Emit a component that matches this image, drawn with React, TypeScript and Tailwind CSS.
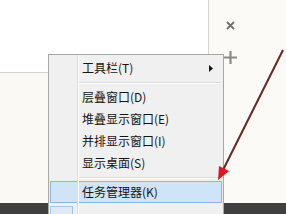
export default function App() {
  return (
    <div className="relative w-[286px] h-[214px] overflow-hidden bg-[#fbf9f4] font-['Noto_Sans_CJK_SC','Noto_Sans',sans-serif]">
      <div className="flex h-[203px]">
        <div className="w-[209px] flex flex-col">
          <div className="h-[73px] bg-white border-b border-r border-[#d4d4d4]" />
          <div className="flex-1" />
        </div>
        <div className="flex-1 bg-[#fcfaf6]">
          <div className="ml-[15px] w-[13px] pt-[21px] flex flex-col items-center">
            <svg width="9" height="9" viewBox="0 0 9 9">
              <path d="M1 1 L8 8 M8 1 L1 8" stroke="#707070" strokeWidth="1.8" />
            </svg>
            <svg className="mt-[21px]" width="13" height="13" viewBox="0 0 13 13">
              <path d="M6.5 0 V13 M0 6.5 H13" stroke="#8a8a8a" strokeWidth="2.2" />
            </svg>
          </div>
        </div>
      </div>
      <div className="h-[11px] bg-[#404040]" />

      {/* context menu */}
      <div className="absolute left-[48px] top-[54px] w-[176px] h-[170px] bg-[#f0f0f0] border border-[#a7a7a7] pt-[2px] text-[12px] text-[#141414] leading-none">
        <div className="h-[22px] flex items-center justify-between pl-[33px] pr-[10px]">
          <span>工具栏(T)</span>
          <svg width="4" height="7" viewBox="0 0 4 7">
            <path d="M0 0 L4 3.5 L0 7 Z" fill="#111" />
          </svg>
        </div>
        <div className="h-[7px] pt-[3px] pl-[29px] pr-[2px]">
          <div className="border-t border-b border-t-[#dcdcdc] border-b-white" />
        </div>
        <div className="h-[22px] flex items-center pl-[33px]">层叠窗口(D)</div>
        <div className="h-[22px] flex items-center pl-[33px]">堆叠显示窗口(E)</div>
        <div className="h-[22px] flex items-center pl-[33px]">并排显示窗口(I)</div>
        <div className="h-[22px] flex items-center pl-[33px]">显示桌面(S)</div>
        <div className="h-[7px] pt-[3px] pl-[29px] pr-[2px]">
          <div className="border-t border-b border-t-[#dcdcdc] border-b-white" />
        </div>
        <div className="mx-[1px] h-[22px] flex items-center pl-[31px] bg-[#d0e4f7] border border-[#92b4d6]">
          任务管理器(K)
        </div>
        <div className="h-[22px] pl-[1px] pt-[3px]">
          <div className="w-[23px] h-[16px] bg-[#dde9f5] border border-[#a9c4e0]" />
        </div>
        <div className="absolute left-[28px] top-0 bottom-0 w-[2px] border-l border-r border-l-[#dcdcdc] border-r-white" />
      </div>

      {/* red arrow */}
      <svg className="absolute left-0 top-0 pointer-events-none" width="286" height="214" viewBox="0 0 286 214">
        <line x1="283" y1="50" x2="223" y2="170" stroke="#6e2222" strokeWidth="2" />
        <polygon points="218,180 219,166 229,171" fill="#e8121c" />
      </svg>
    </div>
  );
}
